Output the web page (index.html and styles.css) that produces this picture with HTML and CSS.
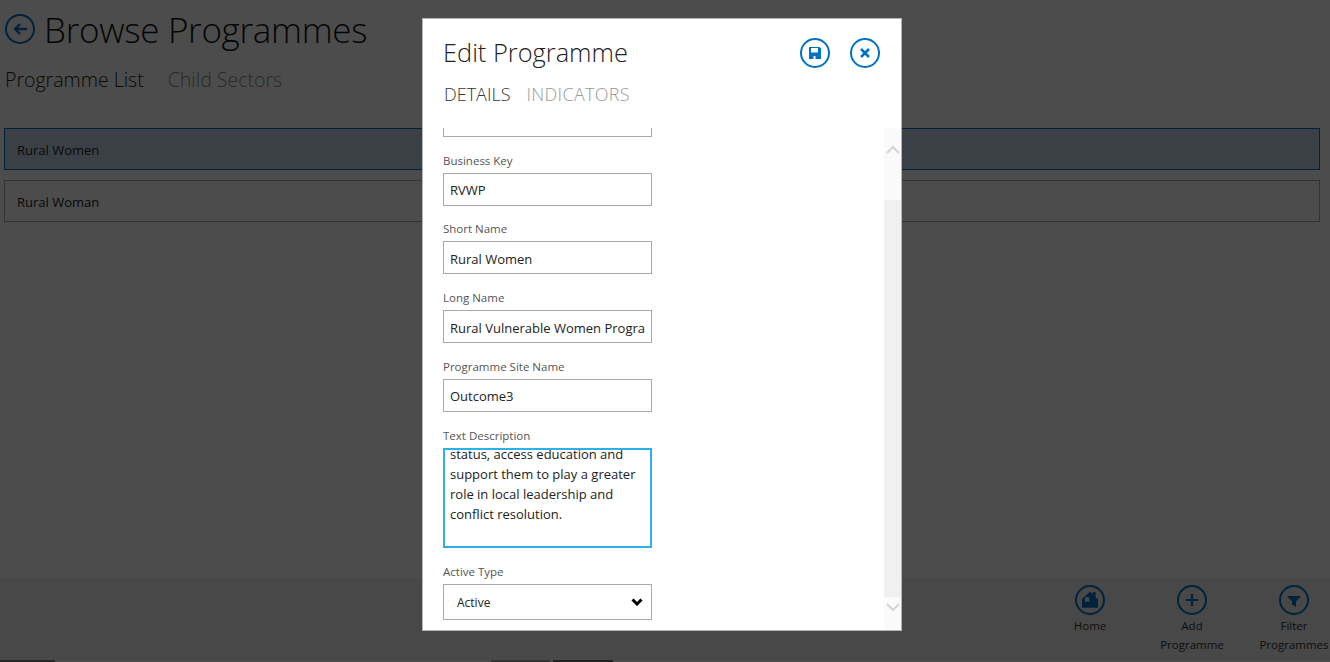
FILE: index.html
```html
<!DOCTYPE html>
<html lang="en">
<head>
  <meta charset="UTF-8" />
  <title>Browse Programmes</title>
  <link rel="stylesheet" href="styles.css">
</head>
<body>
  <div class="page">
    <header class="page-header">
      <svg class="back-icon" viewBox="0 0 30 30" width="30" height="30">
        <circle cx="15" cy="15" r="14" fill="none" stroke="#0072c6" stroke-width="2"/>
        <path d="M22 15H10M15 10l-5 5 5 5" fill="none" stroke="#0072c6" stroke-width="2.4"/>
      </svg>
      <h1>Browse Programmes</h1>
    </header>
    <nav class="page-tabs">
      <span class="tab-active">Programme List</span>
      <span class="tab-idle">Child Sectors</span>
    </nav>
    <div class="list">
      <div class="list-row selected">Rural Women</div>
      <div class="list-row">Rural Woman</div>
    </div>

    <div class="appbar">
      <div class="appbar-item">
        <svg viewBox="0 0 30 30" width="30" height="30">
          <circle cx="15" cy="15" r="14" fill="none" stroke="#0072c6" stroke-width="2"/>
          <path d="M7 14 15 6.700l3 2.300V7h2.500v5l2.500 2.500v8.200H7zM10 12.300v4.400h4.300v-4.400z" fill="#0072c6" fill-rule="evenodd"/>
        </svg>
        <span>Home</span>
      </div>
      <div class="appbar-item">
        <svg viewBox="0 0 30 30" width="30" height="30">
          <circle cx="15" cy="15" r="14" fill="none" stroke="#0072c6" stroke-width="2"/>
          <path d="M15 9v12M9 15h12" fill="none" stroke="#0072c6" stroke-width="2.2"/>
        </svg>
        <span>Add Programme</span>
      </div>
      <div class="appbar-item">
        <svg viewBox="0 0 30 30" width="30" height="30">
          <circle cx="15" cy="15" r="14" fill="none" stroke="#0072c6" stroke-width="2"/>
          <path d="M8 11h14l-5 5.500v5.500l-4-2.500v-3z" fill="#0072c6"/>
        </svg>
        <span>Filter Programmes</span>
      </div>
    </div>

    <div class="bottom-strip">
      <i class="seg-a"></i><i class="seg-b"></i><i class="seg-c"></i><i class="seg-d"></i><i class="seg-e"></i>
    </div>
  </div>

  <div class="overlay"></div>

  <div class="modal">
    <div class="modal-head">
      <h2>Edit Programme</h2>
      <div class="modal-actions">
        <svg viewBox="0 0 30 30" width="30" height="30">
          <circle cx="15" cy="15" r="14" fill="none" stroke="#0072c6" stroke-width="2"/>
          <path d="M9 9h10.500L21 10.500V21H9zM11 10v4.500h7V10zM13.500 18v3h2v-3z" fill="#0072c6" fill-rule="evenodd"/>
        </svg>
        <svg viewBox="0 0 30 30" width="30" height="30">
          <circle cx="15" cy="15" r="14" fill="none" stroke="#0072c6" stroke-width="2"/>
          <path d="M11 11l8 8M19 11l-8 8" fill="none" stroke="#0072c6" stroke-width="2.600"/>
        </svg>
      </div>
    </div>
    <div class="modal-tabs">
      <span class="tab-on">DETAILS</span>
      <span class="tab-off">INDICATORS</span>
    </div>

    <div class="modal-body">
      <form class="form">
        <input class="field-input first-input" type="text" value="">

        <label class="field-label">Business Key</label>
        <input class="field-input" type="text" value="RVWP">

        <label class="field-label">Short Name</label>
        <input class="field-input" type="text" value="Rural Women">

        <label class="field-label">Long Name</label>
        <input class="field-input" type="text" value="Rural Vulnerable Women Programme">

        <label class="field-label">Programme Site Name</label>
        <input class="field-input" type="text" value="Outcome3">

        <label class="field-label wide-label">Text Description</label>
        <div class="field-area">
          <p>status, access education and support them to play a greater role in local leadership and conflict resolution.</p>
        </div>

        <label class="field-label wide-label">Active Type</label>
        <div class="field-select">
          <span>Active</span>
          <svg viewBox="0 0 12 8" width="12" height="8">
            <path d="M1.500 1.500 6 6l4.500-4.500" fill="none" stroke="#000" stroke-width="3"/>
          </svg>
        </div>
      </form>

      <div class="scrollbar">
        <svg class="arrow-up" viewBox="0 0 14 9" width="14" height="9">
          <path d="M1 8l6-6 6 6" fill="none" stroke="#d4d4d4" stroke-width="2"/>
        </svg>
        <div class="thumb"></div>
        <svg class="arrow-down" viewBox="0 0 14 9" width="14" height="9">
          <path d="M1 1l6 6 6-6" fill="none" stroke="#d4d4d4" stroke-width="2"/>
        </svg>
      </div>
    </div>
  </div>
</body>
</html>
```

FILE: styles.css
```css
html, body {
  margin: 0;
  height: 100%;
  overflow: hidden;
}

body {
  font-family: "Open Sans", "Noto Sans", sans-serif;
  background-color: #fff;
  color: #222;
}

.page {
  height: 662px;
  display: flex;
  flex-direction: column;
}

.page-header {
  display: flex;
  align-items: center;
  gap: 9px;
  padding: 8px 0 0 5px;
  height: 42px;
}

.page-header h1 {
  margin: 0;
  font-size: 35px;
  font-weight: 300;
  color: #111;
  letter-spacing: -0.3px;
  white-space: nowrap;
}

.page-tabs {
  display: flex;
  gap: 24px;
  padding: 16px 0 0 5px;
  font-size: 19.500px;
  font-weight: 300;
  height: 34px;
}

.tab-active {
  color: #222;
}

.tab-idle {
  color: #888;
}

.list {
  margin-top: 28px;
  padding: 0 10px 0 4px;
  display: flex;
  flex-direction: column;
  gap: 10px;
}

.list-row {
  height: 40px;
  line-height: 42px;
  padding-left: 12px;
  border: 1px solid #aaa;
  font-size: 13px;
  color: #222;
}

.list-row.selected {
  background-color: #c5d8ea;
  border-color: #0072c6;
}

.appbar {
  margin-top: auto;
  height: 82px;
  background-color: #f0f0f0;
  display: flex;
  justify-content: flex-end;
  gap: 0;
  padding-top: 7px;
  box-sizing: border-box;
}

.appbar-item {
  width: 102px;
  display: flex;
  flex-direction: column;
  align-items: center;
  text-align: center;
  font-size: 11.500px;
  line-height: 19px;
  color: #333;
}

.appbar-item svg {
  margin-bottom: 1px;
}

.appbar-item:last-child {
  margin-right: -15px;
}

.appbar-item span {
  width: 70px;
}

.bottom-strip {
  height: 2px;
  display: flex;
  background-color: #fff;
}

.bottom-strip i {
  display: block;
  height: 2px;
}

.seg-a {
  width: 55px;
  background-color: #888;
}

.seg-b {
  width: 436px;
}

.seg-c {
  width: 59px;
  background-color: #aaa;
}

.seg-d {
  width: 3px;
}

.seg-e {
  width: 60px;
  background-color: #777;
}

.overlay {
  position: absolute;
  top: 0;
  left: 0;
  right: 0;
  bottom: 0;
  background-color: rgba(0, 0, 0, 0.7);
}

.modal {
  position: absolute;
  left: 422px;
  top: 18px;
  width: 480px;
  height: 613px;
  box-sizing: border-box;
  border: 1px solid #b5b5b5;
  background-color: #fff;
  display: flex;
  flex-direction: column;
}

.modal-head {
  display: flex;
  justify-content: space-between;
  align-items: center;
  height: 34px;
  padding: 16px 21px 0 20px;
}

.modal-head h2 {
  margin: 0;
  font-size: 25.400px;
  font-weight: 300;
  color: #222;
}

.modal-actions {
  display: flex;
  gap: 20px;
  padding-top: 2px;
}

.modal-tabs {
  display: flex;
  gap: 16px;
  padding: 13px 0 0 21px;
  height: 29px;
  font-size: 18px;
  font-weight: 300;
  opacity: 0.99;
}

.tab-on {
  color: #333;
}

.tab-off {
  color: #999;
  letter-spacing: 0.3px;
}

.modal-body {
  margin-top: 17px;
  flex: 1;
  min-height: 0;
  display: flex;
  overflow: hidden;
}

.form {
  flex: 1;
  padding-left: 20px;
  display: flex;
  flex-direction: column;
  align-items: flex-start;
}

.field-label {
  margin-top: 14.700px;
  margin-bottom: 4px;
  font-size: 11.500px;
  line-height: 17px;
  color: #555;
}

.wide-label {
  margin-top: 15px;
}

.field-input {
  display: block;
  flex: none;
  width: 209px;
  height: 33px;
  box-sizing: border-box;
  margin: 0;
  padding: 2px 6px 0;
  border: 1px solid #a9a9a9;
  border-radius: 0;
  outline: none;
  font-family: inherit;
  font-size: 13px;
  color: #222;
}

.first-input {
  margin-top: -24px;
}

.field-area {
  flex: none;
  width: 209px;
  height: 100px;
  box-sizing: border-box;
  border: 2px solid #2eb0ea;
  outline: none;
  overflow: hidden;
  padding: 0 6px 0 5px;
}

.field-area p {
  margin: -6px 0 0;
  font-size: 13px;
  line-height: 20px;
  color: #222;
}

.field-select {
  flex: none;
  width: 209px;
  height: 36px;
  box-sizing: border-box;
  border: 1px solid #a9a9a9;
  display: flex;
  justify-content: space-between;
  align-items: center;
  padding: 0 8px 0 13px;
  font-size: 12px;
  color: #222;
}

.field-select span {
  padding-top: 2px;
}

.scrollbar {
  flex: none;
  width: 17px;
  background-color: #fafafa;
  position: relative;
  height: 100%;
}

.thumb {
  position: absolute;
  top: 72px;
  bottom: 33px;
  left: 0;
  right: 0;
  background-color: #f0f0f0;
}

.arrow-up {
  position: absolute;
  top: 17px;
  left: 2px;
}

.arrow-down {
  position: absolute;
  bottom: 18px;
  left: 2px;
}
```
